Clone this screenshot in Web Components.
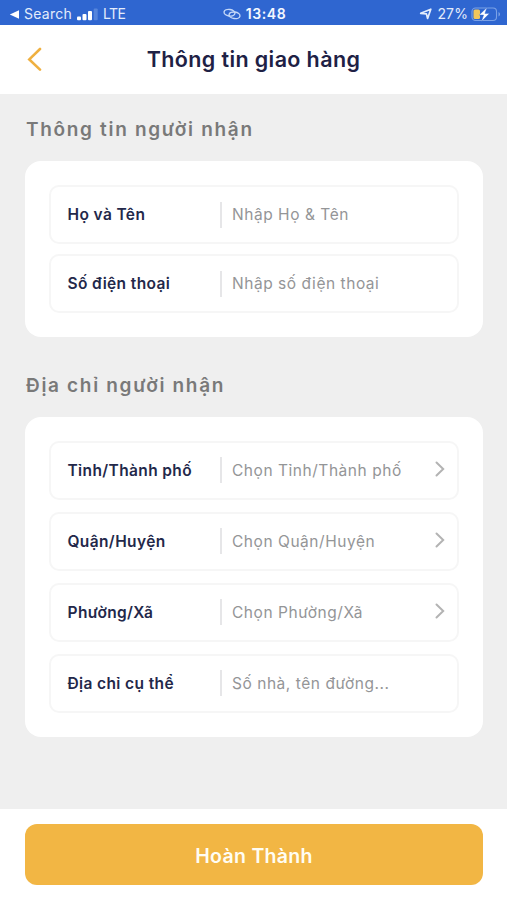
<!DOCTYPE html>
<html lang="vi">
<head>
<meta charset="utf-8">
<title>Thông tin giao hàng</title>
<style>
html,body{margin:0;height:100%}
body{font-family:Inter,"Noto Sans",sans-serif;background:#efefef;overflow:hidden}
</style>
</head>
<body>
<delivery-page></delivery-page>
<script>
const define = (name, html) => {
  const template = document.createElement('template');
  template.innerHTML = html;
  customElements.define(name, class extends HTMLElement {
    constructor() {
      super();
      this.attachShadow({ mode: 'open' }).append(template.content.cloneNode(true));
    }
  });
};

define('status-bar', `
<style>
:host{display:grid;grid-template-columns:1fr auto 1fr;align-items:center;height:25px;box-sizing:border-box;padding:3px 6px 0 9px;background:#2f66d0;color:#e3ecfb;font-size:14px;line-height:20px}
div{display:flex;align-items:center}
.left span:first-of-type{margin:0 5px 0 5px;letter-spacing:.25px}
.left span:last-of-type{margin-left:5px;letter-spacing:-.6px}
.mid{color:#f4f8ff;font-weight:600;letter-spacing:.6px;gap:5px;margin-left:-1px}
.right{justify-content:flex-end}
.right span{margin:0 3px 0 5px;letter-spacing:.1px}
svg{display:block;flex:none}
</style>
<div class="left">
  <svg width="10" height="9" viewBox="0 0 10 9"><path d="M.8 4.500 10 .3v8.400z" fill="#fff"/></svg>
  <span>Search</span>
  <svg width="21" height="13" viewBox="0 0 21 13"><g fill="#fff"><rect y="8.500" width="4" height="3.800" rx="1"/><rect x="5.500" y="6" width="4" height="6.300" rx="1"/><rect x="11" y="3" width="4" height="9.300" rx="1"/></g><rect x="16.700" y=".4" width="4" height="11.900" rx="1" fill="#5685dc"/></svg>
  <span>LTE</span>
</div>
<div class="mid">
  <svg width="18" height="12" viewBox="0 0 18 12" fill="none" stroke="#c4d8f8" stroke-width="1.400" stroke-linecap="round"><ellipse cx="6.500" cy="4.700" rx="5.500" ry="3.300" transform="rotate(8 6.500 4.700)"/><ellipse cx="11.500" cy="7.300" rx="5.500" ry="3.300" transform="rotate(8 11.500 7.300)"/></svg>
  <span>13:48</span>
</div>
<div class="right">
  <svg width="13" height="12" viewBox="0 0 13 12" fill="none" stroke="#e3ecfb" stroke-width="1.700" stroke-linejoin="round"><path d="M1.700 5.300 11.800 1.200 8.600 10.500 7.400 5.900z"/></svg>
  <span>27%</span>
  <svg width="30" height="15" viewBox="0 0 30 15"><rect x="1" y="1" width="24.500" height="12.500" rx="3.500" fill="none" stroke="#7ba1e6" stroke-width="1.100"/><path d="M27.500 5v4.500c2-.8 2-3.700 0-4.500z" fill="#7ba1e6"/><rect x="2.500" y="2.500" width="6.500" height="9.500" rx="1.500" fill="#f2c65c"/><path d="M16 .4 8.200 8h4.400l-2.200 6.600L18.400 6.500h-4.500z" fill="#fff" stroke="#2f66d0" stroke-width=".4"/></svg>
</div>`);

define('nav-header', `
<style>
:host{display:grid;grid-template-columns:56px 1fr 56px;align-items:center;height:69px;box-sizing:border-box;padding-bottom:1px;background:#fff;color:#1e2145}
h1{margin:0;text-align:center;font-size:21.500px;font-weight:600;line-height:28px;letter-spacing:.38px;white-space:nowrap}
svg{display:block;margin-left:27px}
</style>
<svg width="16" height="24" viewBox="0 0 16 24" fill="none" stroke="#efb040" stroke-width="2.600" stroke-linecap="round"><path d="M13 2 2.300 12.400 13 22.600"/></svg>
<h1><slot></slot></h1>`);

define('form-section', `
<style>
:host{display:block}
h2{margin:0;padding:0 1px;height:67px;line-height:72px;font-size:19px;font-weight:600;letter-spacing:1.680px;color:#797979;white-space:nowrap}
div{display:flex;flex-direction:column;gap:var(--row-gap,10px);padding:24px;border-radius:16px;background:#fff}
</style>
<h2><slot name="heading"></slot></h2>
<div><slot></slot></div>`);

define('form-row', `
<style>
:host{display:grid;grid-template-columns:152.500px 1fr auto;align-items:center;height:59px;box-sizing:border-box;border:2px solid #f6f6f6;border-radius:10px;padding:0 12px 0 16.500px;background:#fff;font-size:15.500px;line-height:24px;white-space:nowrap}
.label{color:#23284a;font-weight:600;letter-spacing:.38px;padding-top:1px}
.value{color:#949597;letter-spacing:.54px;display:flex;align-items:center;gap:10px}
.value slot{display:block;padding-top:1px}
.value::before{content:"";width:2px;height:26px;background:#e6e6e8}
svg{display:none;margin-bottom:2px}
:host([picker]) svg{display:block}
</style>
<span class="label"><slot name="label"></slot></span>
<span class="value"><slot></slot></span>
<svg width="10" height="16" viewBox="0 0 10 16" fill="none" stroke="#b3b3b3" stroke-width="2" stroke-linecap="round"><path d="M1.500 1.500 8.200 8 1.500 14.500"/></svg>`);

define('action-bar', `
<style>
:host{display:block;height:91px;box-sizing:border-box;padding:15px 24px 15px 25px;background:#fff}
button{display:block;width:100%;height:61px;border:0;border-radius:12px;background:#f2b644;color:#fffdf3;font:600 19.500px/64px Inter,"Noto Sans",sans-serif;letter-spacing:.3px;padding:0}
</style>
<button><slot></slot></button>`);

define('delivery-page', `
<style>
:host{display:flex;flex-direction:column;height:900px}
main{flex:1;display:flex;flex-direction:column;gap:12.500px;padding:0 24px 0 25px}
.address{--row-gap:12px}
</style>
<status-bar></status-bar>
<nav-header>Thông tin giao hàng</nav-header>
<main>
  <form-section class="person">
    <span slot="heading">Thông tin người nhận</span>
    <form-row><span slot="label">Họ và Tên</span><span>Nhập Họ &amp; Tên</span></form-row>
    <form-row><span slot="label">Số điện thoại</span><span>Nhập số điện thoại</span></form-row>
  </form-section>
  <form-section class="address">
    <span slot="heading">Địa chỉ người nhận</span>
    <form-row picker><span slot="label">Tỉnh/Thành phố</span><span>Chọn Tỉnh/Thành phố</span></form-row>
    <form-row picker><span slot="label">Quận/Huyện</span><span>Chọn Quận/Huyện</span></form-row>
    <form-row picker><span slot="label">Phường/Xã</span><span>Chọn Phường/Xã</span></form-row>
    <form-row><span slot="label">Địa chỉ cụ thể</span><span>Số nhà, tên đường...</span></form-row>
  </form-section>
</main>
<action-bar>Hoàn Thành</action-bar>`);
</script>
</body>
</html>
